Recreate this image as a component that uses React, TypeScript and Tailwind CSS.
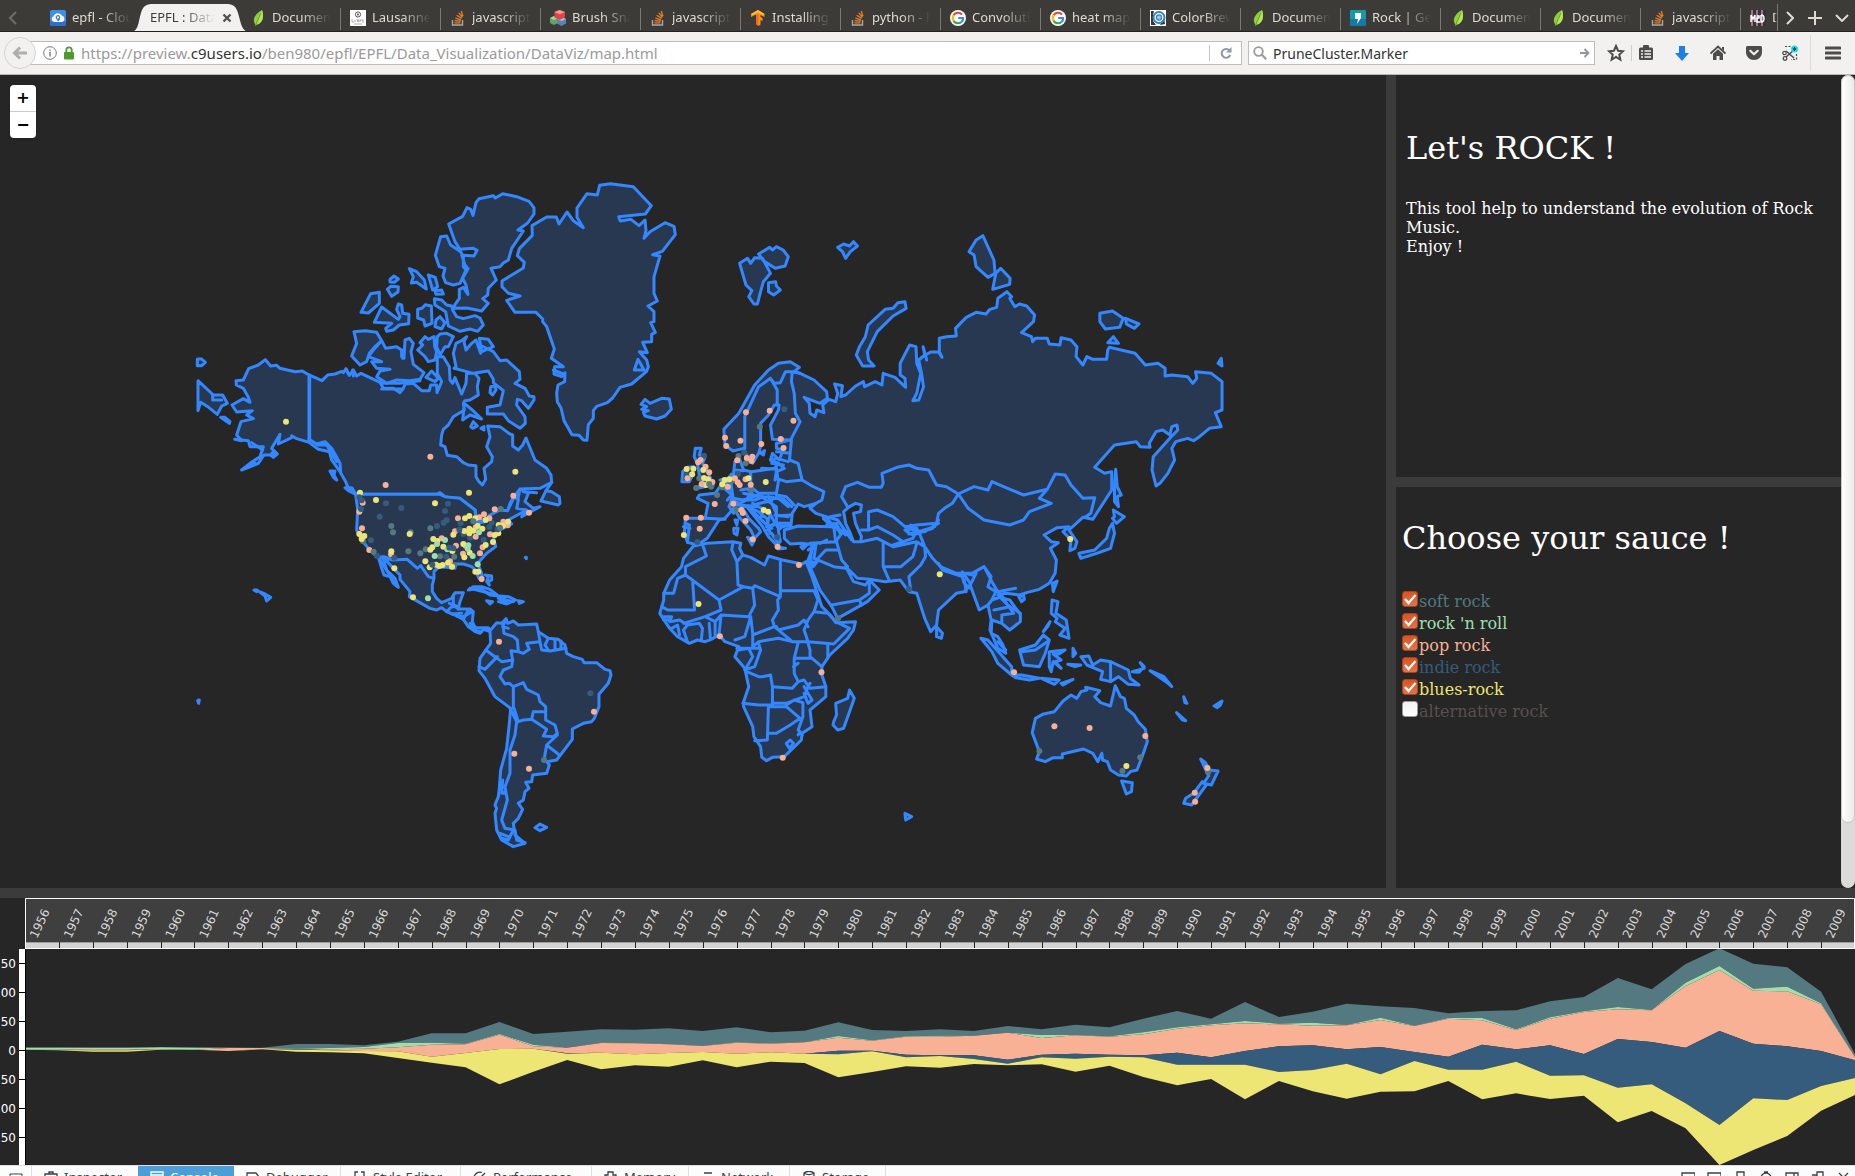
import React, { useState } from "react";

const SOFT = "#547980";
const ROLL = "#9de0ad";
const POP = "#f8b195";
const INDIE = "#355c7d";
const BLUES = "#ede574";

/* ---------- favicons ---------- */

function CloudIcon() {
  return (
    <svg viewBox="0 0 16 16" className="size-4 shrink-0" aria-hidden="true">
      <rect width="16" height="16" rx="2" fill="#3d8fe8" />
      <rect y="11" width="16" height="5" rx="2" fill="#2b6fd0" />
      <path d="M4 12a3 3 0 0 1-.4-5.700A4.500 4.500 0 0 1 12 5.800 3.200 3.200 0 0 1 12 12z" fill="#fff" />
      <path d="M9.600 7.400a1.700 1.700 0 1 0-1.500 1.700c.8 0 1.500-.5 1.500-1.700 0 1.700-.6 3-2.200 3.300" fill="none" stroke="#2f7fdc" strokeWidth="1.200" />
    </svg>
  );
}

function LeafIcon() {
  return (
    <svg viewBox="0 0 16 16" className="size-4 shrink-0" aria-hidden="true">
      <path d="M12 0c1.500 5 1.500 9.500-1.500 12.500-1.500 1.500-3 1.800-4 2.200L5.500 16l-.2-1.500C2 10 4.500 4 12 0z" fill="#8fcf3c" />
      <path d="M12 0c1.500 5 1.500 9.500-1.500 12.500-1.500 1.500-3 1.800-4 2.200z" fill="#b4e35e" />
      <path d="M5.500 16 7 12 11 3" fill="none" stroke="#5f9a1f" strokeWidth=".8" />
    </svg>
  );
}

function LausanneIcon() {
  return (
    <svg viewBox="0 0 16 16" className="size-4 shrink-0" aria-hidden="true">
      <rect width="16" height="16" fill="#fff" />
      <circle cx="8" cy="4.500" r="2.600" fill="none" stroke="#555" />
      <circle cx="8" cy="4.500" r="1" fill="#555" />
      <path d="M2 9v3h2M5 10v2M7 9l1 3 1-3M10 12v-2h3v3M4 14h8" fill="none" stroke="#999" strokeWidth=".8" />
    </svg>
  );
}

function StackIcon() {
  return (
    <svg viewBox="0 0 16 16" className="size-4 shrink-0" aria-hidden="true">
      <path d="M2.500 10v5h10v-5" fill="none" stroke="#a7a9ac" strokeWidth="1.400" />
      <path d="M4.500 12.800h6M4.600 10.600l6 .5M5.300 8l5.600 1.900M6.700 5.200l5 3.200M8.800 2.800l3.600 4.400M11.200 1l1.700 5.300" fill="none" stroke="#f48024" strokeWidth="1.300" />
    </svg>
  );
}

function CubesIcon() {
  return (
    <svg viewBox="0 0 16 16" className="size-4 shrink-0" aria-hidden="true">
      <path d="M0 8l4-2 4 2v5l-4 2-4-2z" fill="#5fa561" />
      <path d="M0 8l4 2 4-2-4-2z" fill="#a6d3a2" />
      <path d="M7 9l4.500-2L16 9v4.500L11.500 16 7 13.500z" fill="#5b83b8" />
      <path d="M7 9l4.500 2L16 9l-4.500-2z" fill="#a9c4e4" />
      <path d="M4.500 2 9.500 0 15 2v5.500L9.500 10l-5-2.500z" fill="#e04545" />
      <path d="M4.500 2 9.500 4.200 15 2 9.500 0z" fill="#f79a94" />
    </svg>
  );
}

function TensorIcon() {
  return (
    <svg viewBox="0 0 16 16" className="size-4 shrink-0" aria-hidden="true">
      <path d="M8 0 1 4v3l5-2.500V14l2.500 2 2-1.500V10l2 1V8l-2-1V5l4 2V4z" fill="#f7931e" />
      <path d="M8 0 1 4l2 1 5-3 5 3 1.500-1z" fill="#ffc32b" />
      <path d="M6 5v9l2.500 2V4z" fill="#ee6c1a" />
    </svg>
  );
}

function GoogleIcon() {
  return (
    <svg viewBox="0 0 16 16" className="size-4 shrink-0" aria-hidden="true">
      <circle cx="8" cy="8" r="8" fill="#fff" />
      <path d="M12 4.600A5.200 5.200 0 0 0 3.600 5.200" fill="none" stroke="#ea4335" strokeWidth="2.200" />
      <path d="M3.600 5.200a5.200 5.200 0 0 0 0 5.600" fill="none" stroke="#fbbc05" strokeWidth="2.200" />
      <path d="M3.600 10.800a5.200 5.200 0 0 0 7.800 1.200" fill="none" stroke="#34a853" strokeWidth="2.200" />
      <path d="M11.400 12A5 5 0 0 0 13.100 8H8.200" fill="none" stroke="#4285f4" strokeWidth="2.200" />
    </svg>
  );
}

function BrewerIcon() {
  return (
    <svg viewBox="0 0 16 16" className="size-4 shrink-0" aria-hidden="true">
      <rect width="16" height="16" fill="#fff" />
      <path d="M1 1h3l-1 4v6l3 4H1zM14 8l1 6-5 1z" fill="#333" />
      <circle cx="9" cy="7.500" r="5.500" fill="none" stroke="#3182bd" strokeWidth="2" />
      <circle cx="9" cy="7.500" r="2.600" fill="#9ecae1" stroke="#3182bd" strokeWidth="1.200" />
    </svg>
  );
}

function GeniusIcon() {
  return (
    <svg viewBox="0 0 16 16" className="size-4 shrink-0" aria-hidden="true">
      <rect width="16" height="16" rx="1" fill="#149aa8" />
      <rect y="9" width="16" height="7" fill="#1664a0" opacity=".6" />
      <path d="M5 3h6v5l-4 6 1-5H5z" fill="#fff" />
    </svg>
  );
}

function MadIcon() {
  return (
    <svg viewBox="0 0 16 16" className="size-4 shrink-0" aria-hidden="true">
      <rect width="16" height="16" fill="#3a3038" />
      <path d="M2 0v16M7 0v16M12 0v16" stroke="#9b7a86" strokeWidth="2" />
      <path d="M1 12V5l2 4 2-4v7M7 6h2v2H7v4h3M11 5v7c4 0 4-7 0-7" fill="none" stroke="#fff" strokeWidth="1.500" />
    </svg>
  );
}

const tabs: { label: string; icon: () => React.ReactElement }[] = [
  { label: "Document", icon: LeafIcon },
  { label: "Lausanne", icon: LausanneIcon },
  { label: "javascript", icon: StackIcon },
  { label: "Brush Snap", icon: CubesIcon },
  { label: "javascript", icon: StackIcon },
  { label: "Installing", icon: TensorIcon },
  { label: "python - h", icon: StackIcon },
  { label: "Convolutio", icon: GoogleIcon },
  { label: "heat map", icon: GoogleIcon },
  { label: "ColorBrew", icon: BrewerIcon },
  { label: "Document", icon: LeafIcon },
  { label: "Rock | Gen", icon: GeniusIcon },
  { label: "Document", icon: LeafIcon },
  { label: "Document", icon: LeafIcon },
  { label: "javascript", icon: StackIcon },
];

function Fade({ children }: { children: React.ReactNode }) {
  return (
    <span className="min-w-0 flex-1 overflow-hidden whitespace-nowrap text-left [mask-image:linear-gradient(to_right,black_50%,transparent_98%)]">
      {children}
    </span>
  );
}

function TabBar() {
  return (
    <nav aria-label="Open tabs" className="flex h-8 shrink-0 overflow-hidden border-b border-[#22211f] bg-[#3c3b37] pt-1 text-[13px] text-[#dfdbd2]">
      <button aria-label="Scroll tabs left" className="flex w-10 shrink-0 items-center pl-2 text-[#6f6d67]">
        <svg viewBox="0 0 10 14" className="h-3.5 w-2.5" aria-hidden="true">
          <path d="M8 1 2 7l6 6" fill="none" stroke="currentColor" strokeWidth="2" />
        </svg>
      </button>
      <button className="flex w-[92px] shrink-0 items-center gap-1.5 pl-2.5">
        <CloudIcon />
        <Fade>epfl - Cloud9</Fade>
      </button>
      <div className="relative flex w-[108px] shrink-0 items-center pl-[18px] text-[#3c3b37]">
        <svg viewBox="0 0 122 28" className="absolute -left-0.5 top-0 h-7 w-[122px]" aria-hidden="true">
          <path d="M0 28C9 28 8 18 11 9 13 2 16 0 23 0H96c7 0 10 2 12 9 3 9 3 19 12 19z" fill="#f2f1f0" />
        </svg>
        <button className="relative flex w-[66px]">
          <Fade>EPFL : DataViz</Fade>
        </button>
        <button aria-label="Close tab" className="relative ml-1.5">
          <svg viewBox="0 0 10 10" className="size-2.5" aria-hidden="true">
            <path d="M1.500 1.500l7 7M8.500 1.500l-7 7" stroke="#55534e" strokeWidth="2.400" />
          </svg>
        </button>
      </div>
      {tabs.map((t, i) => (
        <button key={i} className="relative flex w-[100px] shrink-0 items-center gap-1.5 pl-2.5 pr-2">
          {i > 0 && <span className="absolute left-0 top-1 h-5.5 w-px bg-[#7a7872]" />}
          <t.icon />
          <Fade>{t.label}</Fade>
        </button>
      ))}
      <button className="relative flex min-w-0 flex-1 items-center gap-1.5 overflow-hidden border-r border-[#7a7872] pl-2.5">
        <span className="absolute left-0 top-1 h-5.5 w-px bg-[#7a7872]" />
        <MadIcon />
        <Fade>D3</Fade>
      </button>
      <div className="flex w-[77px] shrink-0 items-center justify-between pl-2 pr-1.5">
        <button aria-label="Scroll tabs right">
          <svg viewBox="0 0 8 14" className="h-3.5 w-2" aria-hidden="true">
            <path d="M1 1l6 6-6 6" fill="none" stroke="currentColor" strokeWidth="2" />
          </svg>
        </button>
        <button aria-label="New tab">
          <svg viewBox="0 0 14 14" className="size-3.5" aria-hidden="true">
            <path d="M7 0v14M0 7h14" stroke="currentColor" strokeWidth="2" />
          </svg>
        </button>
        <button aria-label="List all tabs">
          <svg viewBox="0 0 14 8" className="h-2 w-3.5" aria-hidden="true">
            <path d="M1 1l6 6 6-6" fill="none" stroke="currentColor" strokeWidth="2" />
          </svg>
        </button>
      </div>
    </nav>
  );
}

const toolButtons: { label: string; art: React.ReactNode }[] = [
  {
    label: "Reading list",
    art: (
      <>
        <rect x="1" y="2.500" width="14" height="12.500" rx="1.500" fill="#4c4c4c" />
        <rect x="5" y="0" width="6" height="4" rx="1" fill="#4c4c4c" />
        <path d="M3 6h2M6.500 6H13M3 9h2M6.500 9H13M3 12h2M6.500 12H13" fill="none" stroke="#f2f1f0" strokeWidth="1.400" />
      </>
    ),
  },
  { label: "Downloads", art: <path d="M5 1h6v7h4l-7 8-7-8h4z" fill="#1a7fe8" /> },
  {
    label: "Home",
    art: (
      <>
        <path d="M.5 8.500 8 1.500l7.500 7" fill="none" stroke="#4c4c4c" strokeWidth="1.800" />
        <path d="M3 8.800 8 4.200l5 4.600V15H9.500v-4h-3v4H3zM12 2h2v4l-2-2z" fill="#4c4c4c" />
      </>
    ),
  },
  {
    label: "Save to Pocket",
    art: (
      <>
        <path d="M1.500 1h13c.8 0 1.500.7 1.500 1.500V7c0 4.500-3.500 8-8 8S0 11.500 0 7V2.500C0 1.700.7 1 1.500 1z" fill="#4c4c4c" />
        <path d="M4.300 5.800 8 9.300l3.700-3.500" fill="none" stroke="#f2f1f0" strokeWidth="2.200" strokeLinecap="round" strokeLinejoin="round" />
      </>
    ),
  },
  {
    label: "Screen capture",
    art: (
      <>
        <path d="M3 1.500h7M14.500 9v5.500H9" fill="none" stroke="#4c4c4c" strokeWidth="1.200" strokeDasharray="2 1.500" />
        <path d="M4 6l8 7M12 5 4 12" stroke="#4c4c4c" strokeWidth="1.600" />
        <circle cx="3" cy="13.500" r="1.800" fill="none" stroke="#4c4c4c" strokeWidth="1.300" />
        <circle cx="2.500" cy="8" r="1.700" fill="none" stroke="#4c4c4c" strokeWidth="1.200" />
        <circle cx="12.500" cy="4" r="3.500" fill="#18e0f0" />
        <path d="M12.500 2v4M10.800 3l3.400 2M14.200 3l-3.400 2" stroke="#0b4d60" />
      </>
    ),
  },
];

function Toolbar() {
  return (
    <header className="flex h-[43px] shrink-0 items-center border-b border-[#b9b7b3] bg-[#f2f1f0] pl-1 pr-3.5 text-[14px]">
      <button aria-label="Back" className="z-10 -mr-2 flex size-8 shrink-0 items-center justify-center rounded-full border border-[#d5d3d1] bg-[#f2f1f0]">
        <svg viewBox="0 0 16 16" className="size-4" aria-hidden="true">
          <path d="M15 8H3M8 2.500 2.500 8 8 13.500" fill="none" stroke="#aeaeae" strokeWidth="3" />
        </svg>
      </button>
      <div className="flex h-6 min-w-0 flex-1 items-center border border-[#c0beba] bg-white pl-3.5">
        <svg viewBox="0 0 14 14" className="size-3.5 shrink-0" aria-hidden="true">
          <circle cx="7" cy="7" r="6.300" fill="none" stroke="#7a7a7a" />
          <path d="M7 6v4.500M7 3.500v1.300" stroke="#7a7a7a" strokeWidth="1.400" />
        </svg>
        <svg viewBox="0 0 12 14" className="ml-1.5 h-3.5 w-3 shrink-0" aria-hidden="true">
          <rect x="1" y="6" width="10" height="7.500" rx="1" fill="#4f9a2d" />
          <path d="M3.300 6V4a2.700 2.700 0 0 1 5.400 0v2" fill="none" stroke="#4f9a2d" strokeWidth="1.800" />
        </svg>
        <p className="ml-1.5 min-w-0 flex-1 overflow-hidden whitespace-nowrap text-[15px] leading-[22px] text-[#9a9a9a]">
          https://preview.<span className="text-[#333]">c9users.io</span>/ben980/epfl/EPFL/Data_Visualization/DataViz/map.html
        </p>
        <button aria-label="Reload" className="flex h-4 w-8 items-center justify-center border-l border-[#c8c8c8]">
          <svg viewBox="0 0 12 12" className="size-3" aria-hidden="true">
            <path d="M9.500 3.500A4.400 4.400 0 1 0 10.200 8" fill="none" stroke="#8c98a4" strokeWidth="2" />
            <path d="M11.500 0v5.500H6z" fill="#8c98a4" />
          </svg>
        </button>
      </div>
      <form className="ml-1.5 flex h-6 w-[347px] shrink-0 items-center border border-[#c0beba] bg-white px-1" onSubmit={(e) => e.preventDefault()}>
        <svg viewBox="0 0 14 14" className="size-3.5 shrink-0" aria-hidden="true">
          <circle cx="5.500" cy="5.500" r="4.300" fill="none" stroke="#9a9a9a" strokeWidth="1.800" />
          <path d="M8.800 8.800l4.500 4.500" stroke="#9a9a9a" strokeWidth="2.200" />
        </svg>
        <input aria-label="Search" defaultValue="PruneCluster.Marker" className="ml-1.5 min-w-0 flex-1 bg-transparent text-[#333] outline-none" />
        <button aria-label="Go">
          <svg viewBox="0 0 10 10" className="size-2.5" aria-hidden="true">
            <path d="M0 5h8M4.500 1 8.500 5l-4 4" fill="none" stroke="#8c98a4" strokeWidth="1.800" />
          </svg>
        </button>
      </form>
      <button aria-label="Bookmark this page" className="ml-3">
        <svg viewBox="0 0 18 18" className="size-[18px]" aria-hidden="true">
          <path d="M9 2l2.100 4.700 5 .5-3.800 3.400 1.100 5L9 13l-4.400 2.600 1.100-5L1.900 7.200l5-.5z" fill="none" stroke="#4c4c4c" strokeWidth="2" />
        </svg>
      </button>
      <span className="mx-1.5 h-4 w-px bg-[#cfcdcb]" />
      <div className="flex gap-5">
        {toolButtons.map((b) => (
          <button key={b.label} aria-label={b.label}>
            <svg viewBox="0 0 16 16" className="size-4" aria-hidden="true">
              {b.art}
            </svg>
          </button>
        ))}
      </div>
      <span className="ml-3 h-9 w-px bg-[#dddbd9]" />
      <button aria-label="Open menu" className="ml-3.5">
        <svg viewBox="0 0 16 14" className="h-3.5 w-4" aria-hidden="true">
          <path d="M1 2h14M1 7h14M1 12h14" stroke="#4c4c4c" strokeWidth="3" strokeLinecap="round" />
        </svg>
      </button>
    </header>
  );
}

/* ---------- map ---------- */

// Each region has its own local grid; x and y scales convert it to map units.
type Region = { x: number; y: number; sx: number; sy: number };
const northAmerica: Region = { x: 180, y: 95, sx: 0.33333, sy: 0.33333 };
const southAmerica: Region = { x: 180, y: 385, sx: 0.33333, sy: 0.33333 };
const eurasia: Region = { x: 640, y: 155, sx: 0.39541, sy: 0.33333 };
const southEast: Region = { x: 640, y: 345, sx: 0.39541, sy: 0.33333 };
const europe: Region = { x: 640, y: 325, sx: 0.33333, sy: 0.33333 };

const shapes: { region: Region; land?: string; borders?: string; water?: string }[] = [
  {
    region: northAmerica,
    land:
      // Greenland
      "M1210 173 1191 142 1191 114 1221 71 1252 75 1259 46 1291 41 1360 50 1414 107 1396 132 1316 140 1321 153 1353 148 1377 167 1395 150 1398 182 1392 205 1410 185 1455 158 1482 169 1486 194 1447 244 1418 254 1440 258 1422 320 1422 370 1432 393 1404 408 1422 425 1422 455 1412 458 1426 487 1415 493 1415 515 1388 517 1402 548 1378 545 1400 570 1405 590 1400 604 1355 642 1320 652 1298 684 1282 698 1250 709 1240 722 1240 745 1225 764 1221 811 1210 810 1197 796 1176 794 1152 752 1143 714 1132 695 1130 670 1134 645 1154 635 1155 608 1145 620 1122 612 1124 590 1150 590 1114 565 1123 537 1100 470 1088 455 1088 447 1068 427 1005 427 980 391 1020 378 985 370 966 350 966 333 1030 294 1033 277 1012 257 1018 236 1057 196 1056 167 1100 141 1129 141 1137 162 1161 126 1180 152Z" +
      "M1374 568 1392 600 1363 600Z" +
      // Ellesmere and neighbours
      "M806 162 848 139 861 113 872 118 879 136 888 98 897 86 940 77 946 84 968 71 1010 80 1047 94 1062 113 1062 132 1043 159 1014 180 1030 183 995 235 985 270 970 279 960 290 933 295 949 330 925 355 923 375 908 386 925 400 905 423 860 414 824 415 824 405 838 385 838 358 850 352 864 373 858 345 848 325 864 296 855 285 845 255 882 258 891 241 880 235 840 238 825 215Z" +
      "M782 200 800 198 812 225 842 245 850 260 850 290 858 300 840 340 820 345 797 338 789 318 795 295 778 290 766 256 777 217Z" +
      "M688 296 710 305 733 330 739 357 710 337 694 339 700 320ZM745 315 766 322 773 350 758 360ZM765 362 785 360 790 372 768 373ZM630 328 642 318 655 327 643 337 630 336ZM622 358 632 349 655 350 654 366 635 379ZM572 371 598 367 598 400 565 429 543 427Z" +
      "M605 411 583 457 635 460 617 475 620 484 640 480 658 465 686 461 687 433 668 430 665 405 655 402 650 418 660 440 655 448ZM713 418 726 415 736 404 754 408 756 460 735 468 731 450 713 444Z" +
      "M763 386 785 390 800 405 815 408 818 420 830 440 850 446 885 437 900 444 910 465 893 484 870 477 840 484 805 468 797 425 765 405ZM768 450 780 440 795 458 785 477 765 470Z" +
      "M522 485 555 482 590 487 605 512 585 530 568 550 560 575 540 585 515 558 530 520Z" +
      "M605 512 617 535 650 530 665 540 668 565 672 565 675 510 688 505 700 520 693 545 700 583 732 608 720 628 690 632 650 630 620 640 590 620 600 603 630 598 590 595 575 575 605 575 565 560 580 540Z" +
      "M735 500 745 508 762 500 764 530 770 545 765 570 745 575 735 560 713 540 728 525 720 518ZM780 492 800 490 820 500 805 530 795 530 780 555 770 530 772 500ZM755 603 775 625 765 635 738 622Z" +
      // Baffin
      "M860 500 848 510 828 520 820 550 828 590 822 595 835 598 880 610 925 603 940 628 940 638 970 662 960 705 922 712 922 732 950 732 970 732 985 752 1020 775 1036 760 1035 740 1010 705 1012 688 1025 692 1045 715 1062 690 1062 680 1048 678 1035 655 1005 640 1020 628 1018 605 980 570 960 572 940 545 905 528 902 550 888 510 875 520 858 540 852 515Z" +
      "M898 505 925 508 940 530 905 545ZM853 700 875 718 905 747 870 735 848 750ZM872 770 880 755 892 768 878 775ZM903 775 912 770 912 780ZM932 650 945 648 948 660 938 675 930 668Z" +
      // Alaska
      "M387 615 367 603 345 605 300 595 290 586 272 588 256 569 235 585 206 596 190 630 168 632 169 645 190 655 205 682 210 697 190 686 156 705 170 726 217 722 200 735 220 746 183 755 170 795 185 812 164 808 205 812 210 830 250 830 240 860 210 880 185 900 235 880 252 855 275 855 290 850 275 835 300 793 295 822 335 803 335 797 350 806 387 817Z" +
      // Canada
      "M387 615 426 632 443 615 465 612 485 604 490 608 498 596 508 616 520 600 530 618 543 610 600 637 610 655 640 655 660 668 670 655 675 642 700 640 725 662 748 662 752 645 770 645 771 668 785 635 772 610 772 560 790 560 808 590 810 630 818 640 825 623 845 672 858 640 860 610 885 610 897 625 892 650 895 675 870 690 855 692 850 700 853 720 820 740 805 765 790 778 785 795 782 825 795 830 802 856 830 860 850 878 865 885 888 887 888 920 897 935 907 945 917 928 912 895 935 875 937 860 920 830 930 800 923 768 960 770 990 792 998 795 998 828 1015 840 1028 825 1038 804 1065 870 1100 895 1113 915 1115 937 1080 955 1020 957 1000 983 990 1000 983 1022 955 1023 930 1045 910 1060 890 1060 885 1020 840 985 810 984 795 980 780 968 770 973 527 973 505 955 497 935 480 905 455 870 448 845 415 838 387 817Z" +
      "M1098 962 1083 993 1135 1005 1140 1000 1138 980 1115 965ZM1020 957 1045 970 1035 995 1060 1015 1080 1010 1025 1040 1035 1022 1008 1015Z" +
      "M450 903 465 903 462 915 470 930 460 922ZM495 953 515 953 530 975 505 962ZM54 632 100 675 128 675 142 700 125 708 112 733 86 712 62 697 54 722ZM52 567 65 567 76 577 65 587 52 587ZM122 742 135 742 150 755 148 760ZM272 855 280 845 292 852 280 862Z" +
      "M1383 703 1395 688 1410 700 1445 685 1468 687 1474 718 1455 738 1430 747 1395 738 1390 727 1405 722 1385 718 1400 710Z",
    borders:
      "M389 615V815M530 976H782M387 808 410 822 435 815 455 835 480 880 482 905M410 825 440 825 470 875M98 675V690L125 690M1115 937 1098 962M665 540V560M605 640 660 640 720 632M605 657 668 657M1030 965 1070 968M885 1020 888 1050 930 1050 960 1028M1120 600 1150 612M225 880 200 890M215 818 248 840M500 600 505 612M518 600 520 618",
  },
  {
    region: southAmerica,
    land:
      // United States
      "M527 103H780L795 110 840 115 885 150 890 190 915 185 930 165 960 150 983 152 1003 110 1015 120 1010 145 1040 150 985 180 995 192 960 210 940 230 947 260 920 280 893 310 905 340 905 362 897 355 885 330 875 320 850 312 825 312 825 325 800 322 775 322 762 335 762 355 745 350 722 317 712 325 682 298 640 300 612 290 595 292 590 290 565 265 545 240 530 210 533 150Z" +
      // Mexico and Central America
      "M595 292 605 325 612 345 630 350 640 370 655 382 645 355 620 330 608 290 640 325 660 345 660 358 690 395 688 410 750 445 770 450 785 443 800 455 830 468 850 478 865 500 885 515 900 520 910 508 930 515 925 503 885 503 877 485 880 455 870 447 835 447 840 425 850 398 825 398 815 415 785 428 770 415 757 395 757 375 762 355 745 350 722 317 712 325 682 298 640 300Z" +
      "M865 390 880 380 905 380 930 388 955 408 930 405 900 385ZM960 408 985 410 1007 420 980 432 955 425 978 423ZM1015 422 1030 425 1018 430ZM920 422 938 425 930 432ZM915 345 935 348 935 360 925 365 928 375 920 365 925 350ZM1036 292 1039 292 1039 296ZM222 390 232 390 230 395ZM238 395 255 402 272 412 260 423 255 408ZM53 722 58 720 56 730Z" +
      // South America
      "M930 512 950 488 965 490 978 476 983 490 1000 483 1015 495 1070 492 1075 515 1105 535 1135 538 1155 555 1160 580 1180 590 1207 598 1212 608 1250 608 1275 628 1290 632 1293 645 1285 670 1257 703 1257 740 1243 775 1235 785 1210 790 1177 807 1177 838 1130 900 1100 905 1108 915 1100 940 1058 945 1055 965 1037 967 1047 985 1035 995 1030 1020 1015 1030 1028 1048 1015 1075 1000 1090 1005 1125 1035 1150 1000 1160 965 1140 950 1110 945 1060 950 1045 945 1035 955 1010 958 985 962 930 980 865 988 790 992 745 945 710 915 655 897 632 900 595 918 570 932 550Z" +
      "M1065 1103 1080 1092 1100 1102 1080 1112Z",
    borders:
      "M968 490 972 520 1000 530 1012 540 1015 575 993 572 998 600 965 605 945 590 917 570M952 590 915 628 897 620M1015 575 1030 580 1048 568 1040 550 1080 545 1085 570 1110 573 1158 565M1075 515 1080 545M1105 535 1095 555 1105 570M1125 540V568M1143 543V565M998 600 995 620 970 630 960 650 975 672 988 670 1000 680V745M1000 680 1030 668 1040 688 1075 705 1080 725 1097 740 1097 755 1060 755 1055 778 1030 780 1015 785 1002 745M1055 778 1100 808 1090 828 1120 830 1132 820 1125 795 1097 780V755M1132 825 1100 855 1092 900M1100 855 1138 885M1010 785 1005 825 990 870 990 940 975 980 982 1020 965 1080 975 1105 1005 1110M990 745 1010 785M965 1135 985 1140 1000 1110M960 985 972 1000M800 455 820 435 835 447M820 405V440M830 468 850 470 877 455M865 500 885 500M865 450 850 478M600 300 650 378M1005 1110 1010 1140 1035 1148M960 1120 985 1130M968 960 965 1000M978 478 968 500 985 505M808 430 835 440M815 462 845 460M870 490 890 512 905 515M955 415 1000 425M870 385 950 405",
  },
  {
    region: eurasia,
    land:
      "M405 430 440 450 472 485 474 505 455 520 415 502 428 520 430 550 443 560 447 540 465 548 462 525 478 508 495 515 500 490 492 462 512 467 508 500 520 495 545 468 565 455 568 470 595 455 612 465 615 430 645 442 672 472 670 445 658 435 658 400 682 345 698 350 700 400 710 430 700 490 690 512 705 510 717 470 712 430 705 390 720 375 716 350 725 390 722 375 735 366 755 366 764 382 757 365 757 325 775 320 800 318 798 295 825 262 850 247 875 252 885 238 902 232 905 205 928 185 940 200 935 205 948 230 960 222 978 228 998 255 995 275 965 308 990 320 993 335 1000 325 1030 325 1035 342 1062 345 1065 323 1090 330 1105 350 1103 380 1120 405 1130 380 1145 388 1180 388 1183 360 1187 352 1252 370 1278 405 1310 400 1328 415 1328 438 1345 435 1385 440 1398 460 1408 445 1405 425 1445 430 1472 455 1472 540 1455 548 1470 590 1440 595 1415 620 1400 632 1385 625 1355 635 1345 655 1352 690 1335 730 1315 760 1305 768 1295 720 1298 680 1340 625 1360 600 1358 585 1345 590 1340 615 1322 600 1305 605 1288 640 1290 652 1265 650 1255 635 1200 645 1150 712 1175 730 1193 725 1193 780 1145 868 1120 862 1085 900 1105 935 1100 955 1087 962 1090 930 1070 905 1085 890 1055 893 1022 915 1040 935 1058 938 1038 955 1053 990 1050 1030 1035 1060 1010 1078 980 1087 960 1095 925 1090 905 1095 930 1125 962 1150 962 1175 935 1200 915 1180 890 1170 888 1210 905 1220 918 1245 925 1270 905 1255 885 1200 888 1170 880 1125 858 1140 835 1065 820 1085 800 1090 755 1140 750 1185 735 1205 720 1165 700 1090 680 1085 658 1050 620 1055 580 1048 550 1045 520 1010 540 1055 570 1065 580 1050 605 1080 575 1115 500 1165 485 1130 455 1080 430 1010 425 990 440 945 410 940 380 942 365 925 365 900 400 888 490 890 470 860 445 850 430 835 445 820 415 830 400 822 385 850 382 885 360 890 350 900 355 935 345 945 325 920 310 890 290 860 270 830 255 825 275 865 300 895 305 905 290 925 280 900 250 860 237 835 215 865 200 870 170 925 145 945 120 937 112 910 115 865 165 865 172 820 145 805 150 795 190 790 205 765 235 745 240 695 250 680 262 720 280 725 300 722 340 715 350 700 330 690 335 670 352 690 362 660 345 655 345 640 380 630 335 628 330 585 350 540 352 525 340 525 325 555 305 580 305 650 300 670 285 700 275 690 262 655 235 663 215 645 212 598 250 550 290 465 325 420 350 400 380 395 403 412 390 425Z" +
      "M252 100 272 85 280 100 290 83 310 85 330 130 312 155 305 185 297 222 288 222 275 200 283 182 268 165ZM300 72 328 52 335 60 345 50 362 60 375 80 367 108 342 115 312 92ZM325 158 343 155 345 168 355 180 338 195 325 185ZM500 52 515 42 530 48 540 35 550 48 532 65 520 85 512 65Z" +
      "M670 215 673 235 640 258 600 305 575 365 578 390 592 408 563 408 547 375 555 350 570 320 577 285 620 238 640 235 652 218ZM867 17 895 90 898 130 880 142 850 110 845 75 832 65 850 30ZM912 115 936 145 935 163 892 178 900 130Z" +
      "M1163 250 1195 243 1222 265 1213 292 1177 297 1163 275ZM1228 265 1262 282 1250 295 1230 282ZM1197 320 1210 340 1183 338ZM1470 385 1472 408 1462 400ZM140 655 155 655 150 675 165 680 158 700 175 735 185 765 145 775 160 755 150 735 145 700 137 680ZM108 725 120 712 135 710 133 735 125 755 106 755Z" +
      "M272 922 290 930 283 945ZM237 895 248 895 245 915 238 910ZM240 870 247 870 245 885ZM345 952 368 955 350 957ZM407 950 422 945 412 957ZM305 670 315 662 312 675Z" +
      "M1203 718 1207 770 1217 795 1207 800 1210 830 1200 815 1200 770ZM1197 840 1225 860 1205 880 1195 865 1200 860ZM1195 880 1200 910 1190 955 1155 970 1115 985 1110 970 1150 960 1180 925 1187 895Z",
    borders:
      "M265 655 265 560 300 470 330 445 340 460 355 458 368 425 385 425 405 430M330 445 347 480 347 522M385 425 383 455 390 490 393 550 405 575 383 625M383 630 378 690 400 700 410 750 370 755 345 745M410 750 435 768 465 785 460 810 430 830M345 715 350 755 345 790 300 790 280 770 280 725M330 690 345 685 375 695M350 700 365 715 345 725M345 665 380 670M345 795 370 800 390 825M300 795 345 830 345 880 380 880M325 800 345 850M345 800 375 830M230 760 235 800 225 830 237 850M235 805 262 810 300 795M240 825 300 830M255 780 280 775M262 790 300 800M285 820 330 850 320 890M270 830 310 850 305 865M345 858 380 855M345 880 330 890 322 900M350 895 345 885M165 865 215 868M115 880 125 885 120 937M240 720 262 722M205 765 230 780 235 800M205 765 225 755 232 740" +
      "M470 860 500 870 535 930M490 880 520 915M495 935 510 910M490 890 495 935 430 940M500 900 530 905M525 830 510 800 520 770 550 757 580 772 610 772 615 760 612 730 650 712 680 705 700 715 730 720 750 765 775 770 805 792 790 820 770 835 755 850 750 880 700 885 670 890 640 860 600 840 578 845V900L560 900M805 792 845 770 880 780 890 755 930 775 970 795 1030 778 1010 805 1040 820 985 845 970 870 935 885 870 870 830 835 805 792M1030 778 1050 732 1075 735 1090 765 1120 805 1150 803 1140 850 1125 862M578 900 600 890 640 915 665 935 690 925 700 900 680 890M640 945 665 935M690 900 720 905 755 880M685 885 675 905 690 915 740 895M755 870 745 890 705 905 720 950 740 985 760 1010 800 1030 840 1030 870 1010 890 1055 905 1085 950 1075M720 950 722 980 710 1005 680 1040 685 1085M560 935 600 925 640 950 700 935 720 950M615 940 615 1010 660 1010 690 980 700 940M615 1010 630 1050M497 935 510 990 525 1010M755 1000 765 1020 815 1040 815 1025M815 1040 820 1060 835 1075M818 1030 835 1060M850 1030 835 1065M870 1010 888 1040 880 1070 900 1085 890 1110 880 1125M905 1085 920 1105 935 1110 960 1150M890 1110 915 1100 945 1150 915 1155 915 1175M895 1140 935 1130M440 985 490 1010 520 1015M430 1010 470 960 500 960M435 950 430 1000M445 945 440 985M485 1125 555 1110 580 1090 580 1060M555 1110 560 1125M670 900 700 895M680 912 705 905M815 1028 840 1035M820 1050 825 1085",
    water: "M515 845 530 830 545 820 560 825 558 845 540 850 545 880 560 920 558 935 540 935 530 905 520 880Z",
  },
  {
    region: europe,
    borders:
      "M240 240 265 235 275 222M250 262 275 285 262 300M275 300 300 310 320 300 325 290M325 270 340 285 370 290 345 300 310 300M370 290 400 292 395 302 350 312M325 322 350 345 375 370 395 385M360 340 380 355 385 375M385 335 395 350 405 370 388 378M385 375 390 400M400 295 430 297 455 320M405 345 445 350M405 370 430 380M395 400 415 430M550 355 570 375 590 370 600 400M560 375 590 385M570 350 600 345M505 450 530 430M510 470 520 500 535 480M540 430 560 420M365 205 410 208 405 240M395 190 430 195M310 318 345 318M130 380 150 385",
  },
  {
    region: southEast,
    land:
      // Africa
      "M135 378 170 370 235 365 255 370 252 385 260 405 280 412 315 435 325 408 360 420 410 432 420 425 435 470 460 560 485 590 495 608 545 605 540 630 525 655 480 705 460 740 460 765 470 800 470 830 430 870 435 920 410 940 408 960 365 1010 335 1012 320 1022 308 1012 305 980 288 950 285 920 262 860 262 845 275 800 265 745 240 710 250 680 215 665 200 645 180 658 165 665 145 660 125 670 95 650 75 625 50 580 60 540 60 520 75 480 105 440 110 415Z" +
      "M530 810 542 835 515 925 500 930 488 915 490 905 497 885 495 850 525 835ZM750 620 765 640 762 655 750 650ZM862 655 880 660 940 740 940 765 905 730 890 695ZM940 765 965 765 1010 775 985 780 950 773ZM960 690 1000 675 1020 645 1035 660 1025 700 1010 740 970 735ZM1035 695 1075 690 1060 702 1045 702 1065 720 1050 725 1065 745 1045 725 1040 755 1035 740ZM1015 775 1060 780 1048 793ZM1065 790 1095 778 1070 795ZM1095 685 1102 700 1095 710ZM1082 733 1115 735 1100 740Z" +
      "M1115 710 1135 708 1145 735 1165 720 1190 725 1235 750 1240 775 1262 795 1235 793 1210 770 1190 785 1165 778 1170 755 1130 735ZM1245 755 1275 745 1265 728 1275 740 1262 757ZM1290 752 1325 770 1345 800 1330 785ZM1375 830 1383 850 1378 848ZM1452 858 1472 843 1468 855 1460 863ZM1357 878 1380 902 1372 900ZM1042 540 1057 545 1052 580 1078 600 1085 655 1062 645 1075 625 1050 605 1055 595 1040 580ZM1020 635 1037 605 1032 618ZM1045 515 1043 490 1055 483ZM958 530 970 525 972 538 965 545Z" +
      "M1127 802 1163 812 1150 830 1165 848 1190 858 1202 797 1215 830 1225 835 1230 865 1250 885 1260 905 1278 928 1283 965 1270 1010 1257 1050 1240 1055 1230 1068 1210 1065 1190 1050 1182 1025 1170 1020 1168 1000 1158 1025 1145 1000 1122 987 1068 1002 1068 1013 1045 1013 1025 1025 1003 1017 1010 995 992 938 1000 895 1018 883 1048 875 1070 843 1090 825 1105 835 1115 815 1130 810ZM1218 1083 1245 1088 1243 1115 1230 1122ZM1418 1017 1430 1028 1440 1050 1462 1053 1445 1095 1425 1090 1438 1068ZM1422 1085 1432 1095 1395 1155 1375 1150 1380 1135 1400 1120ZM670 1180 687 1190 672 1200Z",
    borders:
      "M160 380 168 408 115 440 115 465M235 370 232 390 245 425 248 495M260 405 245 425M115 465 95 475 85 520 60 520M115 465 200 540 262 500 248 495M262 500 285 505 290 497 355 530M133 480 138 570 70 570 55 560M200 540 205 570 165 590 110 610M355 425V530L348 540 350 570 335 600 340 620 285 645M355 512H440M285 505 290 555 275 590 205 585 200 640M280 590 285 640 285 680M280 590 265 650 240 660M345 620 350 630 400 615 415 600 425 620M440 512 450 540 440 575 425 600 415 630 425 665 490 672 530 625 500 608M440 575 475 580 495 605M285 680 300 665 350 655 385 665 340 620M385 665 425 665M475 672V715M425 670 430 690 430 710 460 740M390 715H430M300 670 305 690 290 740 265 750M400 668 390 715 390 760 400 785 385 805 335 800 330 765 310 770 300 770 270 755M250 690 275 685 285 710 270 740M245 685H300M335 800 335 830 335 855 300 855 260 850M335 850 370 850 415 830 425 800 430 790M400 785 415 780 430 805 470 800M415 800 435 840 425 850 415 820M325 855 322 960 290 962M330 860 370 860 405 895 380 915 345 940 322 940M370 855 390 840 412 848 412 890 400 930 410 945M405 935 400 945M60 590 80 590 75 605 100 600 120 615 110 630 120 665M75 600H60M120 615 150 610 158 625 155 660M175 610 178 655M165 590 190 605 190 645M80 625 95 615 100 645M205 585 190 605M388 740 400 730M370 970 380 960 388 970 378 985ZM1190 725V780M965 695 1000 690 1030 665M905 665 925 690",
  },
];

const dots: { region: Region; color: string; at: number[][] }[] = [
  {
    region: southAmerica,
    color: INDIE,
    at: [[618, 130], [664, 144], [599, 170], [804, 131], [795, 153], [800, 181], [791, 188], [771, 198], [573, 241], [870, 233], [911, 240], [935, 188], [850, 222], [1231, 700], [799, 290]],
  },
  {
    region: southAmerica,
    color: SOFT,
    at: [[634, 198], [639, 217], [751, 205], [692, 217], [549, 244], [685, 274], [721, 280], [737, 268], [780, 289], [823, 290], [823, 316], [962, 147]],
  },
  {
    region: southAmerica,
    color: POP,
    at: [[617, 75], [1000, 107], [1047, 158], [944, 148], [538, 155], [548, 128], [546, 205], [568, 270], [633, 283], [834, 175], [898, 172], [912, 163], [928, 175], [970, 185], [983, 196], [930, 223], [887, 230], [825, 214], [785, 235], [828, 257], [857, 257], [849, 281], [900, 280], [908, 262], [810, 304], [905, 357], [957, 545], [1242, 755], [1003, 881], [1047, 926], [751, -10], [887, 202]],
  },
  {
    region: southAmerica,
    color: BLUES,
    at: [[318, -115], [540, 98], [588, 120], [765, 130], [867, 98], [1006, 35], [538, 222], [553, 228], [545, 237], [689, 222], [634, 274], [643, 325], [699, 412], [760, 237], [772, 243], [790, 260], [757, 262], [751, 269], [736, 304], [749, 322], [768, 314], [778, 318], [788, 315], [804, 308], [816, 320], [820, 224], [855, 175], [868, 168], [886, 175], [853, 213], [868, 206], [868, 220], [880, 212], [893, 198], [907, 206], [917, 180], [956, 195], [968, 198], [984, 185], [944, 225], [955, 220], [939, 246], [917, 255], [850, 252], [869, 278], [853, 292], [886, 335], [895, 335], [817, 273]],
  },
  {
    region: southAmerica,
    color: ROLL,
    at: [[744, 415], [893, 313], [764, 288], [771, 252], [795, 240], [802, 268], [865, 256], [863, 266], [878, 288], [897, 217]],
  },
  { region: southAmerica, color: INDIE, at: [[538, 112], [545, 121], [543, 147], [591, 288], [643, 293], [842, 190], [838, 209], [928, 201], [953, 208], [820, 265], [808, 263], [757, 314]] },
  { region: southAmerica, color: SOFT, at: [[581, 275], [1092, 900], [960, 203], [880, 184]] },
  { region: eurasia, color: INDIE, at: [[365, 538], [263, 668], [118, 733], [248, 731], [347, 922], [145, 936], [162, 677]] },
  { region: eurasia, color: SOFT, at: [[249, 678], [267, 700], [142, 774], [232, 752], [281, 781], [244, 840], [150, 745], [208, 772], [180, 770]] },
  {
    region: eurasia,
    color: POP,
    at: [[268, 547], [328, 542], [388, 572], [215, 623], [218, 648], [254, 632], [307, 642], [356, 627], [363, 654], [246, 691], [270, 684], [284, 680], [282, 693], [153, 690], [147, 697], [166, 710], [175, 727], [120, 745], [183, 756], [240, 745], [247, 757], [252, 765], [267, 748], [280, 764], [222, 770], [189, 822], [236, 821], [256, 840], [260, 849], [267, 873], [117, 863], [154, 863], [151, 896], [285, 928], [348, 950]],
  },
  {
    region: eurasia,
    color: BLUES,
    at: [[118, 717], [135, 716], [132, 733], [160, 720], [162, 744], [172, 748], [166, 765], [214, 750], [226, 748], [208, 763], [274, 745], [318, 756], [313, 840], [324, 845], [111, 915], [1088, 927]],
  },
  { region: eurasia, color: SOFT, at: [[175, 762], [195, 795], [303, 590]] },
  { region: eurasia, color: POP, at: [[156, 762]] },
  { region: southEast, color: SOFT, at: [[501, 595], [1010, 993], [1265, 1012], [1220, 1053], [1437, 1057]] },
  { region: southEast, color: INDIE, at: [[680, 508]] },
  { region: southEast, color: POP, at: [[402, 435], [202, 649], [459, 757], [361, 1013], [946, 757], [1048, 919], [1137, 924], [1278, 948], [1435, 1044], [1403, 1118], [1404, 1145]] },
  { region: southEast, color: BLUES, at: [[148, 552], [758, 463], [1230, 1038]] },
];

function WorldMap() {
  return (
    <section aria-label="Map" className="relative min-w-0 flex-1 overflow-hidden bg-[#262626]">
      <svg viewBox="0 0 1386 813" preserveAspectRatio="xMidYMid meet" className="block size-full" role="img" aria-label="World map of bands">
        {shapes.map((s, i) => (
          <g
            key={i}
            transform={`translate(${s.region.x} ${s.region.y}) scale(${s.region.sx} ${s.region.sy})`}
            stroke="#3388ff"
            strokeWidth="3"
            strokeLinejoin="round"
            strokeLinecap="round"
          >
            {s.land && <path d={s.land} fill="#293851" vectorEffect="non-scaling-stroke" />}
            {s.water && <path d={s.water} fill="#262626" vectorEffect="non-scaling-stroke" />}
            {s.borders && <path d={s.borders} fill="none" vectorEffect="non-scaling-stroke" />}
          </g>
        ))}
        {dots.map((d, i) => (
          <g key={i} fill={d.color}>
            {d.at.map(([x, y], j) => (
              <circle key={j} cx={d.region.x + x * d.region.sx} cy={d.region.y + y * d.region.sy} r="3" />
            ))}
          </g>
        ))}
      </svg>
      <div className="absolute left-2.5 top-2.5 flex w-[26px] flex-col overflow-hidden rounded bg-white text-center font-['DejaVu_Sans'] text-[16px] font-bold text-black shadow">
        <button aria-label="Zoom in" className="h-[27px] border-b border-[#ccc] leading-[26px]">+</button>
        <button aria-label="Zoom out" className="h-[26px] leading-[26px]">−</button>
      </div>
    </section>
  );
}

/* ---------- side panels ---------- */

const genres = [
  { name: "soft rock", tone: "text-[#547980]", on: true },
  { name: "rock 'n roll", tone: "text-[#9de0ad]", on: true },
  { name: "pop rock", tone: "text-[#f8b195]", on: true },
  { name: "indie rock", tone: "text-[#355c7d]", on: true },
  { name: "blues-rock", tone: "text-[#ede574]", on: true },
  { name: "alternative rock", tone: "text-[#594f4f]", on: false },
];

function Genre({ name, tone, on }: { name: string; tone: string; on: boolean }) {
  const [checked, setChecked] = useState(on);
  return (
    <label className={`flex h-[22px] items-start ${tone}`}>
      <span className="relative mr-px size-4 shrink-0">
        <input
          type="checkbox"
          checked={checked}
          onChange={() => setChecked(!checked)}
          className="block size-4 appearance-none rounded-[3px] border border-[#9a9a9a] bg-gradient-to-b from-[#f2f2f2] to-white checked:border-[#a8431c] checked:from-[#d9531e] checked:to-[#e0754a]"
        />
        {checked && (
          <svg viewBox="0 0 16 16" className="pointer-events-none absolute inset-0 size-4" aria-hidden="true">
            <path d="M3 8l3.500 4L13.500 4" fill="none" stroke="#fff" strokeWidth="2.200" />
          </svg>
        )}
      </span>
      <span className="leading-[22px]">{name}</span>
    </label>
  );
}

function SidePanels() {
  return (
    <aside className="flex w-[459px] shrink-0 bg-[#262626] font-['DejaVu_Serif',serif] text-[16px] text-white">
      <div className="grid min-w-0 flex-1 grid-rows-2 gap-2.5 bg-[#3b3b3b]">
        <section className="bg-[#262626] px-2.5 pt-[54px]">
          <h1 className="text-[32px] leading-[38px]">Let's ROCK !</h1>
          <p className="mt-8 leading-[19px]">
            This tool help to understand the evolution of Rock Music.
            <br />
            Enjoy !
          </p>
        </section>
        <section className="bg-[#262626] px-1.5 pt-8">
          <h1 className="text-[32px] leading-[38px]">Choose your sauce !</h1>
          <div className="mt-[34px]">
            {genres.map((g) => (
              <Genre key={g.name} {...g} />
            ))}
          </div>
        </section>
      </div>
      <div className="flex w-3.5 shrink-0 flex-col rounded-full bg-[#dcdbda]">
        <div className="h-[92%] rounded-full border border-[#c9c7c5] bg-gradient-to-r from-white to-[#ebeae9]" />
      </div>
    </aside>
  );
}

/* ---------- timeline ---------- */

// Layer edges for each year: soft top, roll top, pop top, indie top, blues top, blues bottom.
const edges = [
  [502, 503, 509, 509, 509, 509], [502, 503, 509, 510, 510, 511], [502, 504, 508, 510, 511, 515], [502, 504, 508, 510, 511, 515],
  [501, 502, 508, 508, 508, 509], [502, 503, 509, 509, 509, 509], [503, 503, 504, 513, 513, 513], [503, 504, 504, 507, 507, 508],
  [492, 506, 508, 508, 509, 515], [492, 504, 508, 511, 511, 517], [496, 501, 506, 513, 513, 520], [485, 489, 502, 514, 514, 534],
  [460, 488, 494, 530, 530, 548], [460, 491, 493, 519, 519, 562], [426, 462, 464, 507, 507, 613], [462, 494, 499, 506, 506, 575],
  [455, 503, 503, 520, 521, 540], [448, 488, 489, 518, 518, 568], [449, 489, 490, 523, 523, 556], [445, 492, 493, 519, 519, 560],
  [453, 497, 498, 516, 516, 541], [442, 487, 488, 521, 521, 562], [457, 490, 491, 517, 517, 545], [452, 487, 487, 521, 521, 549],
  [427, 468, 473, 512, 523, 592], [450, 481, 482, 512, 514, 576], [453, 469, 470, 524, 532, 559], [448, 467, 470, 526, 528, 563],
  [453, 467, 467, 526, 537, 552], [438, 458, 458, 539, 551, 556], [448, 465, 474, 524, 532, 553], [434, 465, 466, 521, 536, 575],
  [442, 469, 470, 524, 530, 557], [416, 457, 463, 526, 532, 591], [393, 442, 446, 518, 554, 616], [416, 433, 436, 532, 554, 597],
  [366, 423, 430, 513, 554, 658], [411, 431, 433, 499, 576, 603], [395, 428, 437, 496, 570, 634], [371, 435, 436, 508, 551, 656],
  [379, 413, 420, 501, 583, 635], [384, 437, 438, 516, 543, 634], [400, 414, 416, 530, 569, 603], [393, 414, 421, 494, 569, 658],
  [391, 448, 450, 508, 545, 640], [364, 412, 416, 496, 587, 657], [351, 394, 396, 522, 586, 647], [294, 381, 388, 477, 623, 727],
  [328, 390, 391, 486, 613, 693], [252, 308, 318, 503, 670, 745], [205, 258, 270, 453, 735, 855], [251, 326, 332, 491, 655, 810],
  [262, 320, 334, 499, 660, 768], [335, 370, 373, 513, 618, 692], [522, 530, 532, 541, 594, 645],
];
const layerColors = [SOFT, ROLL, POP, INDIE, BLUES];
const STEP = 1830 / 54;
const years = Array.from({ length: 54 }, (_, i) => 1956 + i);
const levels = [150, 100, 50, 0, -50, -100, -150];

function layerPath(k: number) {
  const top = edges.map((e, i) => `${i * STEP} ${e[k] / 3 - 18}`);
  const bottom = edges.map((e, i) => `${i * STEP} ${e[k + 1] / 3 - 18}`).reverse();
  return `M${top.join(" ")} ${bottom.join(" ")}Z`;
}

function Timeline() {
  return (
    <section aria-label="Timeline" className="flex h-[267px] shrink-0 overflow-hidden bg-[#262626]">
      <svg viewBox="0 0 25 267" className="h-full w-[25px] shrink-0" aria-hidden="true">
        <rect x="19" y="51" width="6" height="216" fill="#fff" />
        {levels.map((v, i) => (
          <g key={v}>
            <path d={`M19 ${65.5 + i * 29}h6`} stroke="#000" />
            <text x="16" y={70 + i * 29} textAnchor="end" fontSize="12" fontFamily="DejaVu Sans" fill="#fff">
              {Math.abs(v)}
            </text>
          </g>
        ))}
      </svg>
      <svg viewBox="0 0 1830 267" preserveAspectRatio="none" className="h-full min-w-0 flex-1" role="img" aria-label="Bands per genre by year">
        <rect width="1830" height="267" fill="#262626" />
        <rect width="1830" height="44" fill="#3f3f3f" />
        <rect y="44" width="1830" height="6" fill="#d3d3d3" />
        <path d="M0 44.500H1830" stroke="#a09c9c" />
        {years.map((y, i) => (
          <g key={y}>
            {i > 0 && <path d={`M${Math.round(i * STEP) + 0.5} 44v6`} stroke="#222" />}
            <text transform={`translate(${i * STEP + 12} 41) rotate(-65)`} fontSize="12" fontFamily="DejaVu Sans" fill="#d8d8d8">
              {y}
            </text>
          </g>
        ))}
        {layerColors.map((c, k) => (
          <path key={c} d={layerPath(k)} fill={c} />
        ))}
        <path d="M.5 50V.5H1829.500V50" fill="none" stroke="#fff" />
        <path d="M0 50.500H1830" stroke="#fff" />
        <path d="M.5 51V267" stroke="#000" />
      </svg>
    </section>
  );
}

/* ---------- developer tools strip ---------- */

const tools = [
  { name: "Inspector", box: "w-[106px]", icon: "M1 3h12v9H1zM5 3V1h4v2" },
  { name: "Console", box: "w-24 bg-[#4c9ed9] text-white", icon: "M1 1h12v11H1zM1 4h12" },
  { name: "Debugger", box: "w-[107px] border-r", icon: "M1 2h9l3 4-3 5H1z" },
  { name: "Style Editor", box: "w-[120px] border-r", icon: "M5 1H2v11h3M8 1h3v11H8" },
  { name: "Performance", box: "w-[131px] border-r", icon: "M13 7A6 6 0 1 1 9 1.500M7 7l5-5" },
  { name: "Memory", box: "w-[97px] border-r", icon: "M4 4V1h5v3h3v6H1V4z" },
  { name: "Network", box: "w-[101px] border-r", icon: "M3 2h8M1 6h12" },
  { name: "Storage", box: "w-24 border-r", icon: "M2 2c3-2 7-2 10 0v9H2zM2 2c3 2 7 2 10 0" },
];
const windowIcons = ["M1 2h13v9H1z", "M1 2h13v9H1z", "M4 1h7v10H4z", "M2 7a5 5 0 0 1 10 0M5 1h4", "M1 2h12v9H1zM9 2v9", "M6 1h6v8H6zM1 4h5", "M2 2l9 9M11 2l-9 9"];

function DevTools() {
  return (
    <footer className="flex h-[11px] shrink-0 items-start overflow-hidden border-t border-[#dddfe1] bg-[#fcfcfc] text-[13px] text-[#393f4c]">
      <button aria-label="Pick an element" className="flex h-6 w-8 shrink-0 items-center justify-center border-r border-[#dddfe1]">
        <svg viewBox="0 0 14 14" className="size-3.5" aria-hidden="true">
          <path d="M1 3h12v8H1z" fill="none" stroke="currentColor" />
        </svg>
      </button>
      {tools.map((t) => (
        <button key={t.name} className={`flex h-6 shrink-0 items-center gap-1.5 border-[#dddfe1] pl-3 ${t.box}`}>
          <svg viewBox="0 0 14 14" className="size-3.5" aria-hidden="true">
            <path d={t.icon} fill="none" stroke="currentColor" strokeWidth="1.300" />
          </svg>
          {t.name}
        </button>
      ))}
      <div className="ml-auto flex h-6 items-center gap-3 pr-1">
        {windowIcons.map((d, i) => (
          <button key={i} aria-label={`Toolbox option ${i + 1}`}>
            <svg viewBox="0 0 14 14" className="size-3.5" aria-hidden="true">
              <path d={d} fill="none" stroke="currentColor" strokeWidth="1.300" />
            </svg>
          </button>
        ))}
      </div>
    </footer>
  );
}

export default function App() {
  return (
    <div className="flex h-screen flex-col overflow-hidden bg-[#3b3b3b] font-['Noto_Sans',sans-serif]">
      <TabBar />
      <Toolbar />
      <main className="flex min-h-0 flex-1 flex-col gap-2.5">
        <div className="flex min-h-0 flex-1 gap-2.5">
          <WorldMap />
          <SidePanels />
        </div>
        <Timeline />
      </main>
      <DevTools />
    </div>
  );
}
